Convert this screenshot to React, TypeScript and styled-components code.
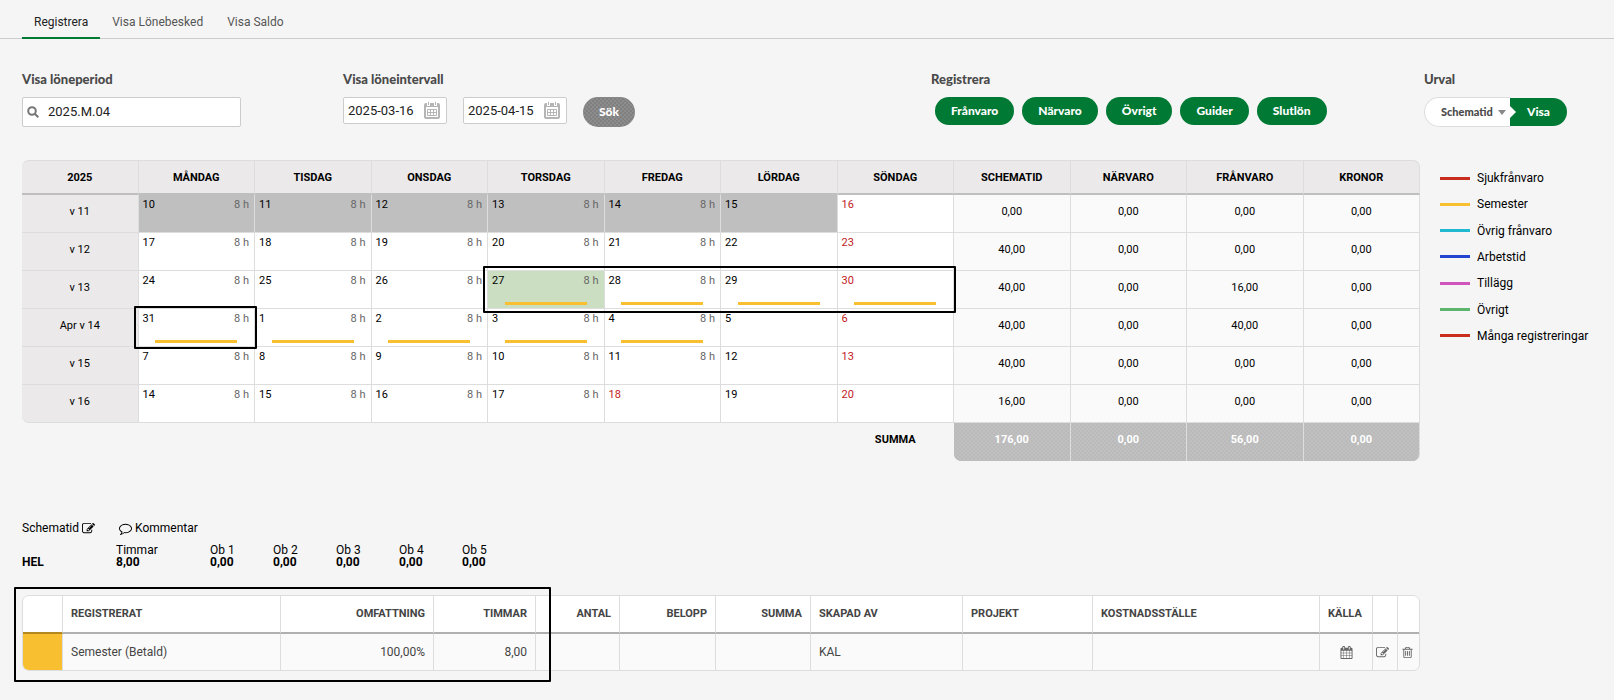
import React from 'react';
import styled, { createGlobalStyle, css } from 'styled-components';

const Global = createGlobalStyle`
  * { box-sizing: border-box; }
  body { margin: 0; background: #f5f5f5; color: #000; font-family: Roboto, "Liberation Sans", sans-serif; font-size: 12px; line-height: 16px; }
  button, input, select { font: inherit; margin: 0; }
`;

const display = css`
  font-family: Lato, "Open Sans", sans-serif;
  font-weight: 900;
`;

const Tabs = styled.nav`
  display: flex;
  height: 39px;
  padding: 0 22px;
  border-bottom: 1px solid #ccc;
`;

const Tab = styled.a<{ $active?: boolean }>`
  height: 39px;
  padding: 14px 12px 0;
  color: ${(p) => (p.$active ? '#222' : '#555')};
  text-decoration: none;
  border-bottom: 2px solid ${(p) => (p.$active ? '#007934' : 'transparent')};
`;

const Toolbar = styled.section`
  display: grid;
  grid-template-columns: 321fr 588fr 493fr 190fr;
  padding: 31px 0 0 22px;
  height: 121px;
`;

const Group = styled.div``;

const Caption = styled.h2`
  ${display}
  margin: 0 0 9px;
  font-size: 13px;
  line-height: 18px;
  color: #4a4a4a;
`;

const Line = styled.div<{ $gap: number; $inset?: number }>`
  display: flex;
  gap: ${(p) => p.$gap}px;
  padding-left: ${(p) => p.$inset || 0}px;
`;

const Field = styled.label<{ $wide?: boolean }>`
  display: flex;
  align-items: center;
  width: ${(p) => (p.$wide ? 219 : 104)}px;
  height: ${(p) => (p.$wide ? 30 : 27)}px;
  padding: 0 ${(p) => (p.$wide ? 5 : 6)}px 0 4px;
  gap: ${(p) => (p.$wide ? 9 : 0)}px;
  background: #fff;
  border: 1px solid #ccc;
  border-radius: 2px;
  svg { flex: none; }
`;

const TextInput = styled.input`
  flex: 1;
  min-width: 0;
  padding: 0;
  border: 0;
  outline: 0;
  background: none;
  font-size: 13px;
  color: #222;
`;

const Pill = styled.button`
  ${display}
  height: 28px;
  padding: 0 16px;
  border: 0;
  border-radius: 14px;
  background: #007934;
  color: #fff;
  font-size: 12px;
  line-height: 16px;
  white-space: nowrap;
`;

const SearchPill = styled(Pill)`
  height: 30px;
  border-radius: 15px;
  background:
    radial-gradient(circle, #8c8c8c 1px, transparent 1px) 0 0 / 4px 4px,
    radial-gradient(circle, #8c8c8c 1px, transparent 1px) 2px 2px / 4px 4px,
    #808080;
`;

const Split = styled.div`
  display: flex;
  align-items: center;
  width: 143px;
  position: relative;
`;

const SelectBox = styled.div`
  display: flex;
  align-items: center;
  gap: 1px;
  width: 86px;
  height: 30px;
  padding-left: 16px;
  background: #fff;
  border: 1px solid #ddd;
  border-right: 0;
  border-radius: 15px 0 0 15px;
`;

const Select = styled.select`
  ${display}
  appearance: none;
  width: 56px;
  padding: 0;
  border: 0;
  background: none;
  color: #4a4a4a;
  font-size: 11px;
`;

const ShowPill = styled(Pill)`
  width: 57px;
  border-radius: 0 14px 14px 0;
  padding: 0;
`;

const Notch = styled.svg`
  position: absolute;
  left: 86px;
  top: 9px;
`;

const Main = styled.div`
  display: flex;
  padding-left: 22px;
`;

const CalendarPane = styled.section`
  flex: 1;
  min-width: 0;
`;

const CalendarTable = styled.table`
  width: 100%;
  table-layout: fixed;
  border-collapse: separate;
  border-spacing: 0;
  text-align: center;
  font-size: 11px;
  line-height: 14px;
`;

const HeadCell = styled.th`
  height: 35px;
  padding: 2px 0 0;
  background: #ebe9e9;
  border-top: 1px solid #ddd;
  border-right: 1px solid #ddd;
  border-bottom: 2px solid #bfbfbf;
  font-weight: 700;
  &:first-child { border-top-left-radius: 7px; }
  &:last-child { border-top-right-radius: 7px; }
`;

const WeekCell = styled.th<{ $last: boolean }>`
  height: 38px;
  padding: 0 0 4px;
  background: #ebe9e9;
  border-right: 1px solid #ddd;
  border-bottom: 1px solid #ddd;
  border-bottom-left-radius: ${(p) => (p.$last ? 7 : 0)}px;
  font-weight: 400;
`;

type Tone = 'plain' | 'past' | 'today';
const tones: Record<Tone, string> = { plain: '#fff', past: '#bfbfbf', today: '#cbdec1' };

const DayCell = styled.td<{ $tone: Tone }>`
  position: relative;
  height: 38px;
  padding: 0;
  background: ${(p) => tones[p.$tone]};
  border-right: 1px solid #ddd;
  border-bottom: 1px solid #ddd;
`;

const Day = styled.div`
  display: flex;
  flex-direction: column;
  justify-content: space-between;
  height: 37px;
  padding: 3px 5px 3px 4px;
`;

const DayTop = styled.div<{ $red: boolean }>`
  display: flex;
  justify-content: space-between;
  color: ${(p) => (p.$red ? '#c2201c' : '#000')};
`;

const Hours = styled.span`
  color: #666;
`;

const Bar = styled.div`
  height: 3px;
  width: 77%;
  margin-left: 12%;
  background: #f8bf30;
`;

const Mark = styled.div<{ $days: number }>`
  position: absolute;
  z-index: 1;
  top: -${(p) => (p.$days > 1 ? 5 : 3)}px;
  bottom: -${(p) => (p.$days > 1 ? 5 : 3)}px;
  left: -5px;
  width: calc(${(p) => p.$days * 100}% + ${(p) => (p.$days > 1 ? 11 : 8)}px);
  border: 2px solid #000;
  border-radius: 1px;
  pointer-events: none;
`;

const SumCell = styled.td`
  height: 38px;
  padding: 0 0 4px;
  background: #fafafa;
  border-right: 1px solid #ddd;
  border-bottom: 1px solid #ddd;
`;

const SumLabel = styled.th`
  height: 38px;
  padding: 0 0 4px;
  border-right: 1px solid transparent;
`;

const TotalCell = styled.td`
  padding: 0 0 4px;
  background:
    radial-gradient(circle, #bababa 1px, transparent 1px) 0 0 / 4px 4px,
    radial-gradient(circle, #bababa 1px, transparent 1px) 2px 2px / 4px 4px,
    #c0c0c0;
  border-right: 1px solid #ddd;
  color: #fff;
  font-weight: 700;
  &:nth-child(3) { border-bottom-left-radius: 7px; }
  &:last-child { border-bottom-right-radius: 7px; }
`;

const Legend = styled.ul`
  display: flex;
  flex-direction: column;
  justify-content: space-between;
  width: 194px;
  height: 184px;
  margin: 0;
  padding: 10px 0 0 20px;
  list-style: none;
`;

const LegendItem = styled.li<{ $color: string }>`
  display: flex;
  align-items: center;
  gap: 7px;
  line-height: 16px;
  &::before {
    content: '';
    width: 30px;
    height: 3px;
    background: ${(p) => p.$color};
  }
`;

const Details = styled.section`
  padding: 59px 194px 28px 22px;
`;

const Links = styled.div`
  display: flex;
  gap: 24px;
`;

const TextLink = styled.a`
  display: inline-flex;
  align-items: center;
  gap: 3px;
  color: inherit;
  text-decoration: none;
`;

const Hourly = styled.table`
  table-layout: fixed;
  width: 504px;
  margin: 8px 0 27px;
  border-collapse: collapse;
  text-align: left;
  line-height: 12px;
  th, td { padding: 0; }
  thead th { font-weight: 400; }
  tbody { font-weight: 700; }
`;

const Frame = styled.div`
  position: relative;
`;

const FrameMark = styled.div`
  position: absolute;
  top: -8px;
  bottom: -11px;
  left: -8px;
  width: calc(38% + 6px);
  border: 2px solid #000;
  border-radius: 1px;
  pointer-events: none;
`;

const EntryTable = styled.table`
  width: 100%;
  table-layout: fixed;
  border-collapse: separate;
  border-spacing: 0;
  border: 1px solid #ddd;
  border-radius: 7px;
  overflow: hidden;
  color: #444;
`;

type CellProps = { $align?: 'left' | 'right' | 'center'; $accent?: boolean; $tight?: boolean };

const entryBox = css<CellProps>`
  padding: 0 8px 0 ${(p) => (p.$tight ? 3 : 8)}px;
  border-right: 1px solid #ddd;
  text-align: ${(p) => p.$align || 'left'};
  white-space: nowrap;
  &:last-child { border-right: 0; padding-right: 0; }
`;

const EntryHead = styled.th<CellProps>`
  ${entryBox}
  height: 38px;
  background: #fff;
  border-bottom: 2px solid ${(p) => (p.$accent ? '#b3891f' : '#b0b0b0')};
  font-size: 11px;
`;

const EntryCell = styled.td<CellProps>`
  ${entryBox}
  height: 36px;
  background: ${(p) => (p.$accent ? '#f8bf30' : '#fafafa')};
`;

const IconButton = styled.button`
  display: flex;
  padding: 0;
  border: 0;
  background: none;
  color: #666;
`;

const CenteredIconButton = styled(IconButton)`
  margin: 0 auto;
`;

const paths = {
  edit: 'M888 1184l116-116-152-152-116 116v56h96v96h56zm440-720q-16-16-33 1l-350 350q-17 17-1 33t33-1l350-350q17-17 1-33zm80 594v190q0 119-84.5 203.5t-203.5 84.5h-832q-119 0-203.5-84.5t-84.5-203.5v-832q0-119 84.5-203.5t203.5-84.5h832q63 0 117 25 15 7 18 23 3 17-9 29l-49 49q-14 14-32 8-23-6-45-6h-832q-66 0-113 47t-47 113v832q0 66 47 113t113 47h832q66 0 113-47t47-113v-126q0-13 9-22l64-64q15-15 35-7t20 29zm-96-738l288 288-672 672h-288v-288zm444 132l-92 92-288-288 92-92q28-28 68-28t68 28l152 152q28 28 28 68t-28 68z',
  trash: 'M704 736v576q0 14-9 23t-23 9h-64q-14 0-23-9t-9-23v-576q0-14 9-23t23-9h64q14 0 23 9t9 23zm256 0v576q0 14-9 23t-23 9h-64q-14 0-23-9t-9-23v-576q0-14 9-23t23-9h64q14 0 23 9t9 23zm256 0v576q0 14-9 23t-23 9h-64q-14 0-23-9t-9-23v-576q0-14 9-23t23-9h64q14 0 23 9t9 23zm128 724v-948h-896v948q0 22 7 40.5t14.5 27 10.5 8.5h832q3 0 10.5-8.5t14.5-27 7-40.5zm-672-1076h448l-48-117q-7-9-17-11h-317q-10 2-17 11zm928 32v64q0 14-9 23t-23 9h-96v948q0 83-47 143.5t-113 60.5h-832q-66 0-113-58.5t-47-141.5v-952h-96q-14 0-23-9t-9-23v-64q0-14 9-23t23-9h309l70-167q15-37 54-63t79-26h320q40 0 79 26t54 63l70 167h309q14 0 23 9t9 23z',
  calendar: 'M192 1664h288v-288h-288v288zm352 0h320v-288h-320v288zm-352-352h288v-320h-288v320zm352 0h320v-320h-320v320zm-352-384h288v-288h-288v288zm736 736h320v-288h-320v288zm-384-736h320v-288h-320v288zm768 736h288v-288h-288v288zm-384-352h320v-320h-320v320zm-352-864v-288q0-13-9.5-22.5t-22.5-9.5h-64q-13 0-22.5 9.5t-9.5 22.5v288q0 13 9.5 22.5t22.5 9.5h64q13 0 22.5-9.5t9.5-22.5zm736 864h288v-320h-288v320zm-384-384h320v-288h-320v288zm384 0h288v-288h-288v288zm32-480v-288q0-13-9.5-22.5t-22.5-9.5h-64q-13 0-22.5 9.5t-9.5 22.5v288q0 13 9.5 22.5t22.5 9.5h64q13 0 22.5-9.5t9.5-22.5zm384-64v1280q0 52-38 90t-90 38h-1408q-52 0-90-38t-38-90v-1280q0-52 38-90t90-38h128v-96q0-66 47-113t113-47h64q66 0 113 47t47 113v96h384v-96q0-66 47-113t113-47h64q66 0 113 47t47 113v96h128q52 0 90 38t38 90z',
  comment: 'M896 384q-204 0-381.5 69.5t-282 187.5-104.5 255q0 112 71.5 213.5t201.5 175.5l87 50-27 96q-24 91-70 172 152-63 275-171l43-38 57 6q69 8 130 8 204 0 381.5-69.5t282-187.5 104.5-255-104.5-255-282-187.5-381.5-69.5zm896 512q0 174-120 321.5t-326 233-450 85.5q-70 0-145-8-198 175-460 242-49 14-114 22h-5q-15 0-27-10.5t-16-27.5v-1q-3-4-.5-12t2-10 4.5-9.5l6-9 7-8.5 8-9q7-8 31-34.5t34.5-38 31-39.5 32.5-51 27-59 26-76q-157-89-247.5-220t-90.5-281q0-174 120-321.5t326-233 450-85.5 450 85.5 326 233 120 321.5z',
};

const Icon = ({ name, size = 13 }: { name: keyof typeof paths; size?: number }) => (
  <svg width={size} height={size} viewBox="0 0 1792 1792" fill="currentColor" aria-hidden="true">
    <path d={paths[name]} />
  </svg>
);

const DateIcon = () => (
  <svg width="16" height="17" viewBox="0 0 16 17" fill="none" stroke="#b5b5b5" aria-hidden="true">
    <rect x="1" y="2" width="14" height="14" rx="1" strokeWidth="2" />
    <path d="M1 3.500h14" strokeWidth="3" />
    <path d="M4.500 0v4M11.500 0v4" stroke="#fff" strokeWidth="3" />
    <path d="M4.500 0v3M11.500 0v3" strokeWidth="1" />
    <path d="M3.500 7.500h9v6h-9zM3.500 10.500h9M6.500 7.500v6M9.500 7.500v6" />
  </svg>
);

const days = ['MÅNDAG', 'TISDAG', 'ONSDAG', 'TORSDAG', 'FREDAG', 'LÖRDAG', 'SÖNDAG'];
const sums = ['SCHEMATID', 'NÄRVARO', 'FRÅNVARO', 'KRONOR'];
const weeks = [
  { name: 'v 11', days: [10, 11, 12, 13, 14, 15, 16], bars: [], sums: ['0,00', '0,00', '0,00', '0,00'] },
  { name: 'v 12', days: [17, 18, 19, 20, 21, 22, 23], bars: [], sums: ['40,00', '0,00', '0,00', '0,00'] },
  { name: 'v 13', days: [24, 25, 26, 27, 28, 29, 30], bars: [3, 4, 5, 6], sums: ['40,00', '0,00', '16,00', '0,00'] },
  { name: 'Apr v 14', days: [31, 1, 2, 3, 4, 5, 6], bars: [0, 1, 2, 3, 4], sums: ['40,00', '0,00', '40,00', '0,00'] },
  { name: 'v 15', days: [7, 8, 9, 10, 11, 12, 13], bars: [], sums: ['40,00', '0,00', '0,00', '0,00'] },
  { name: 'v 16', days: [14, 15, 16, 17, 18, 19, 20], bars: [], sums: ['16,00', '0,00', '0,00', '0,00'] },
] as { name: string; days: number[]; bars: number[]; sums: string[] }[];

const legend = [
  ['Sjukfrånvaro', '#c92d1d'],
  ['Semester', '#f8bf30'],
  ['Övrig frånvaro', '#22b8d2'],
  ['Arbetstid', '#2544d0'],
  ['Tillägg', '#d054bb'],
  ['Övrigt', '#5cb56c'],
  ['Många registreringar', '#c92d1d'],
];

const entryWidths = [40, 218, 153, 102, 84, 96, 95, 152, 130, 227, 53, 25, 21];

export default function App() {
  return (
    <>
      <Global />
      <Tabs>
        <Tab href="#registrera" $active>Registrera</Tab>
        <Tab href="#lonebesked">Visa Lönebesked</Tab>
        <Tab href="#saldo">Visa Saldo</Tab>
      </Tabs>
      <Toolbar>
        <Group>
          <Caption>Visa löneperiod</Caption>
          <Field $wide>
            <svg width="12" height="12" viewBox="0 0 12 12" fill="none" stroke="#777" strokeWidth="2" aria-hidden="true">
              <circle cx="5" cy="5" r="3.800" />
              <path d="M7.800 7.800l3.500 3.500" />
            </svg>
            <TextInput aria-label="Visa löneperiod" defaultValue="2025.M.04" />
          </Field>
        </Group>
        <Group>
          <Caption>Visa löneintervall</Caption>
          <Line $gap={16}>
            <Field>
              <TextInput aria-label="Från datum" defaultValue="2025-03-16" />
              <DateIcon />
            </Field>
            <Field>
              <TextInput aria-label="Till datum" defaultValue="2025-04-15" />
              <DateIcon />
            </Field>
            <SearchPill>Sök</SearchPill>
          </Line>
        </Group>
        <Group>
          <Caption>Registrera</Caption>
          <Line $gap={8} $inset={4}>
            {['Frånvaro', 'Närvaro', 'Övrigt', 'Guider', 'Slutlön'].map((t) => (
              <Pill key={t}>{t}</Pill>
            ))}
          </Line>
        </Group>
        <Group>
          <Caption>Urval</Caption>
          <Split>
            <SelectBox>
              <Select aria-label="Urval"><option>Schematid</option></Select>
              <svg width="8" height="5" viewBox="0 0 8 5" aria-hidden="true"><path d="M0 0h8l-4 5z" fill="#888" /></svg>
            </SelectBox>
            <ShowPill>Visa</ShowPill>
            <Notch width="6" height="12" viewBox="0 0 6 12" aria-hidden="true"><path d="M0 0l6 6-6 6z" fill="#fff" /></Notch>
          </Split>
        </Group>
      </Toolbar>
      <Main>
        <CalendarPane>
          <CalendarTable>
            <thead>
              <tr>
                <HeadCell>2025</HeadCell>
                {days.concat(sums).map((d) => <HeadCell key={d}>{d}</HeadCell>)}
              </tr>
            </thead>
            <tbody>
              {weeks.map((w, wi) => (
                <tr key={w.name}>
                  <WeekCell $last={wi === 5}>{w.name}</WeekCell>
                  {w.days.map((d, i) => {
                    const red = i === 6 || (wi === 5 && d === 18);
                    const tone: Tone = wi === 0 && i < 6 ? 'past' : wi === 2 && d === 27 ? 'today' : 'plain';
                    return (
                      <DayCell key={d} $tone={tone}>
                        <Day>
                          <DayTop $red={red}>
                            <span>{d}</span>
                            {i < 5 && !red && <Hours>8 h</Hours>}
                          </DayTop>
                          {w.bars.includes(i) && <Bar />}
                        </Day>
                        {tone === 'today' && <Mark $days={4} />}
                        {d === 31 && <Mark $days={1} />}
                      </DayCell>
                    );
                  })}
                  {w.sums.map((s, i) => <SumCell key={i}>{s}</SumCell>)}
                </tr>
              ))}
            </tbody>
            <tfoot>
              <tr>
                <td colSpan={7} />
                <SumLabel>SUMMA</SumLabel>
                {['176,00', '0,00', '56,00', '0,00'].map((s, i) => <TotalCell key={i}>{s}</TotalCell>)}
              </tr>
            </tfoot>
          </CalendarTable>
        </CalendarPane>
        <Legend>
          {legend.map(([name, color]) => <LegendItem key={name} $color={color}>{name}</LegendItem>)}
        </Legend>
      </Main>
      <Details>
        <Links>
          <TextLink href="#schematid">Schematid <Icon name="edit" /></TextLink>
          <TextLink href="#kommentar"><Icon name="comment" /> Kommentar</TextLink>
        </Links>
        <Hourly>
          <colgroup>
            {[94, 94, 63, 63, 63, 63, 64].map((w, i) => <col key={i} width={w} />)}
          </colgroup>
          <thead>
            <tr>
              <td />
              {['Timmar', 'Ob 1', 'Ob 2', 'Ob 3', 'Ob 4', 'Ob 5'].map((t) => <th key={t}>{t}</th>)}
            </tr>
          </thead>
          <tbody>
            <tr>
              <th>HEL</th>
              {['8,00', '0,00', '0,00', '0,00', '0,00', '0,00'].map((t, i) => <td key={i}>{t}</td>)}
            </tr>
          </tbody>
        </Hourly>
        <Frame>
          <EntryTable>
            <colgroup>
              {entryWidths.map((w, i) => <col key={i} width={w} />)}
            </colgroup>
            <thead>
              <tr>
                <EntryHead $accent />
                <EntryHead>REGISTRERAT</EntryHead>
                <EntryHead $align="right">OMFATTNING</EntryHead>
                <EntryHead $align="right">TIMMAR</EntryHead>
                <EntryHead $align="right">ANTAL</EntryHead>
                <EntryHead $align="right">BELOPP</EntryHead>
                <EntryHead $align="right">SUMMA</EntryHead>
                <EntryHead>SKAPAD AV</EntryHead>
                <EntryHead>PROJEKT</EntryHead>
                <EntryHead>KOSTNADSSTÄLLE</EntryHead>
                <EntryHead>KÄLLA</EntryHead>
                <EntryHead />
                <EntryHead />
              </tr>
            </thead>
            <tbody>
              <tr>
                <EntryCell $accent />
                <EntryCell>Semester (Betald)</EntryCell>
                <EntryCell $align="right">100,00%</EntryCell>
                <EntryCell $align="right">8,00</EntryCell>
                <EntryCell />
                <EntryCell />
                <EntryCell />
                <EntryCell>KAL</EntryCell>
                <EntryCell />
                <EntryCell />
                <EntryCell>
                  <CenteredIconButton aria-label="Kalender"><Icon name="calendar" /></CenteredIconButton>
                </EntryCell>
                <EntryCell $tight><IconButton aria-label="Redigera"><Icon name="edit" /></IconButton></EntryCell>
                <EntryCell $tight><IconButton aria-label="Ta bort"><Icon name="trash" /></IconButton></EntryCell>
              </tr>
            </tbody>
          </EntryTable>
          <FrameMark />
        </Frame>
      </Details>
    </>
  );
}
